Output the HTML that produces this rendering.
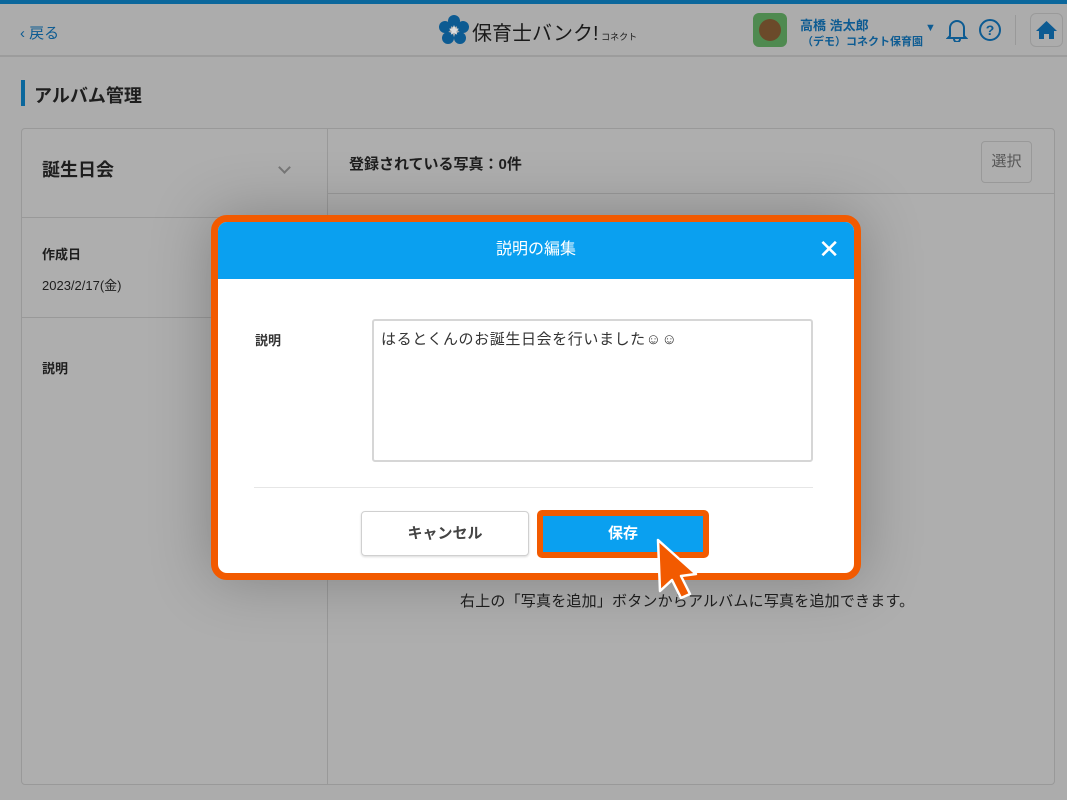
<!DOCTYPE html>
<html><head><meta charset="utf-8"><style>
*{box-sizing:border-box;margin:0;padding:0}
body{width:1067px;height:800px;overflow:hidden;background:#acacac;font-family:"Liberation Sans","Noto Sans CJK JP",sans-serif;color:#1e1e1e;position:relative}
.abs{position:absolute}
.top{left:0;top:0;width:1067px;height:4px;background:#0b679c}
.hdr{left:0;top:4px;width:1067px;height:53px;border-bottom:2px solid #9c9c9c;background:#acacac}
.blue{color:#0d5b92}
</style></head><body>
<div class="abs top"></div>
<div class="abs hdr"></div>
<div class="abs blue" style="left:20px;top:22px;font-size:15px">‹ 戻る</div>
<svg class="abs" style="left:438px;top:14px" width="32" height="32" viewBox="0 0 32 32"><g fill="#0d5b92"><circle cx="16" cy="7" r="6"/><circle cx="25" cy="13" r="6"/><circle cx="22" cy="24" r="6"/><circle cx="10" cy="24" r="6"/><circle cx="7" cy="13" r="6"/></g><path d="M16 11l1.5 3.5 3.5.3-2.7 2.3.9 3.6-3.2-2-3.2 2 .9-3.6-2.7-2.3 3.5-.3z" fill="#ddd"/></svg>
<div class="abs" style="left:472px;top:17px;font-size:20px;color:#1a1a1a">保育士バンク!<span style="font-size:9px"> コネクト</span></div>
<div class="abs" style="left:753px;top:13px;width:34px;height:34px;border-radius:6px;background:#4f8a50"><div style="margin:6px auto;width:22px;height:22px;border-radius:50%;background:#6b4a2a"></div></div>
<div class="abs blue" style="left:800px;top:15px;font-size:13px;font-weight:bold">高橋 浩太郎</div>
<div class="abs blue" style="left:802px;top:33px;font-size:11px;font-weight:bold">（デモ）コネクト保育園</div>
<div class="abs blue" style="left:925px;top:22px;font-size:11px">▼</div>
<svg class="abs" style="left:946px;top:18px" width="22" height="24" viewBox="0 0 22 24"><path d="M4 18V10a7 7 0 0114 0v8l2 2H2z M8 21a3 3 0 006 0" fill="none" stroke="#0d5b92" stroke-width="2"/></svg>
<div class="abs" style="left:979px;top:19px;width:22px;height:22px;border:2px solid #0d5b92;border-radius:50%;color:#0d5b92;font-size:14px;font-weight:bold;text-align:center;line-height:18px">?</div>
<div class="abs" style="left:1015px;top:15px;width:1px;height:30px;background:#999"></div>
<div class="abs" style="left:1030px;top:13px;width:33px;height:34px;border:1px solid #9a9a9a;border-radius:6px"><svg width="31" height="32" viewBox="0 0 31 32"><path d="M15.5 7L5 17h3v8h5v-5h5v5h5v-8h3z" fill="#0d5b92"/></svg></div>
<div class="abs" style="left:21px;top:80px;width:4px;height:26px;background:#0b679c"></div>
<div class="abs" style="left:34px;top:82px;font-size:18px;font-weight:bold">アルバム管理</div>
<div class="abs" style="left:21px;top:128px;width:1034px;height:657px;border:1px solid #999;border-radius:4px;background:#aeaeae"></div>
<div class="abs" style="left:327px;top:129px;width:1px;height:655px;background:#999"></div>
<div class="abs" style="left:22px;top:217px;width:305px;height:1px;background:#999"></div>
<div class="abs" style="left:22px;top:317px;width:305px;height:1px;background:#999"></div>
<div class="abs" style="left:328px;top:193px;width:726px;height:1px;background:#999"></div>
<div class="abs" style="left:42px;top:156px;font-size:18px;font-weight:bold">誕生日会</div>
<div class="abs" style="left:280px;top:163px;width:9px;height:9px;border-right:2px solid #777;border-bottom:2px solid #777;transform:rotate(45deg)"></div>
<div class="abs" style="left:42px;top:244px;font-size:13px;font-weight:bold">作成日</div>
<div class="abs" style="left:42px;top:275px;font-size:13px">2023/2/17(金)</div>
<div class="abs" style="left:42px;top:358px;font-size:13px;font-weight:bold">説明</div>
<div class="abs" style="left:349px;top:153px;font-size:15px;font-weight:bold">登録されている写真：0件</div>
<div class="abs" style="left:981px;top:141px;width:51px;height:42px;border:1px solid #999;border-radius:4px;font-size:15px;color:#555;text-align:center;line-height:40px">選択</div>
<div class="abs" style="left:460px;top:590px;font-size:15px;letter-spacing:0.2px">右上の「写真を追加」ボタンからアルバムに写真を追加できます。</div>
<div class="abs" style="left:211px;top:215px;width:650px;height:365px;border:7px solid #f25a00;border-radius:16px;background:#fff;overflow:hidden;box-shadow:0 0 60px rgba(0,0,0,.25)">
<div style="height:57px;background:#0aa0f0;color:#fff;text-align:center;font-size:16px;line-height:55px;position:relative">説明の編集<span style="position:absolute;right:14px;top:0;font-size:26px">✕</span></div>
</div>
<div class="abs" style="left:255px;top:330px;font-size:13px;font-weight:bold;color:#333">説明</div>
<div class="abs" style="left:372px;top:319px;width:441px;height:143px;border:2px solid #d6d6d6;border-radius:3px;padding:7px;font-size:15px;letter-spacing:0.6px;color:#333">はるとくんのお誕生日会を行いました☺☺</div>
<div class="abs" style="left:254px;top:487px;width:559px;height:1px;background:#e6e6e6"></div>
<div class="abs" style="left:361px;top:511px;width:168px;height:45px;border:1px solid #d0d0d0;border-radius:4px;box-shadow:0 1px 2px rgba(0,0,0,.15);text-align:center;line-height:43px;font-size:15px;font-weight:bold;color:#444">キャンセル</div>
<div class="abs" style="left:537px;top:510px;width:172px;height:48px;border:6px solid #f25a00;border-radius:5px;background:#0aa0f0;color:#fff;text-align:center;line-height:36px;font-size:15px;font-weight:bold">保存</div>
<svg class="abs" style="left:652px;top:536px" width="50" height="66" viewBox="0 0 50 66"><path d="M6 4L44 38 29 40 38 58 29 62 20 44 8 55z" fill="#f25a00" stroke="#fff" stroke-width="2.5" stroke-linejoin="round"/></svg>
</body></html>
